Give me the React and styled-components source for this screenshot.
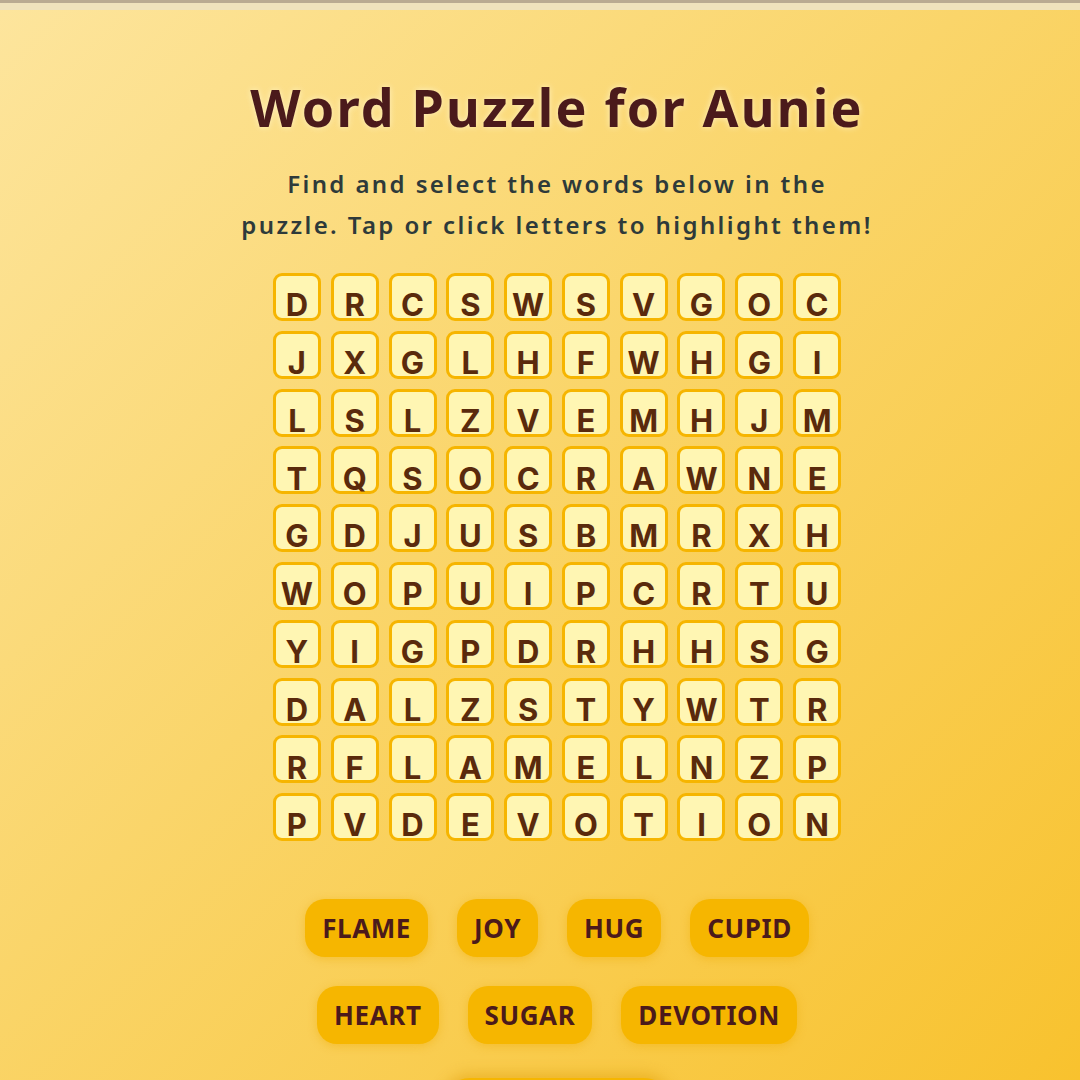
import React from "react";
import styled, { createGlobalStyle } from "styled-components";

const GRID = [
  "DRCSWSVGOC",
  "JXGLHFWHGI",
  "LSLZVEMHJM",
  "TQSOCRAWNE",
  "GDJUSBMRXH",
  "WOPUIPCRTU",
  "YIGPDRHHSG",
  "DALZSTYWTR",
  "RFLAMELNZP",
  "PVDEVOTION",
];

const WORDS = [
  ["FLAME", "JOY", "HUG", "CUPID"],
  ["HEART", "SUGAR", "DEVOTION"],
];

const GlobalStyle = createGlobalStyle`
  html, body {
    margin: 0;
    padding: 0;
    height: 100%;
    overflow: hidden;
  }
  body {
    font-family: "Noto Sans", "Open Sans", sans-serif;
    background: linear-gradient(135deg, #fde59d 0%, #fad56a 45%, #f8c22e 100%);
  }
`;

const BrowserEdge = styled.div`
  height: 7px;
  background: #efe3bd;
  border-top: 3px solid #b9ab92;
`;

const Page = styled.main`
  display: flex;
  flex-direction: column;
  align-items: center;
  padding: 62px 0 0 34px;
`;

const Title = styled.h1`
  margin: 0;
  font-size: 52px;
  line-height: 70px;
  font-weight: 700;
  letter-spacing: 2.2px;
  color: #4b1a1b;
  text-shadow: 0 0 6px rgba(255, 244, 200, 0.9);
`;

const Subtitle = styled.p`
  margin: 21px 0 0;
  width: 700px;
  text-align: center;
  font-size: 24px;
  line-height: 41px;
  font-weight: 600;
  letter-spacing: 2.4px;
  color: #2e3a3a;
`;

const Board = styled.div`
  margin-top: 28px;
  display: grid;
  grid-template-columns: repeat(10, 48px);
  grid-auto-rows: 48px;
  gap: 9.8px;
`;

const Cell = styled.div`
  box-sizing: border-box;
  display: flex;
  justify-content: center;
  align-items: flex-end;
  padding-bottom: 0;
  border: 3px solid #f6b500;
  border-radius: 9px;
  background: #fff6b3;
  color: #5a2a0c;
  font-family: Inter, "Noto Sans", sans-serif;
  font-size: 31px;
  font-weight: 700;
  line-height: 0.8;
`;

const WordList = styled.div`
  margin-top: 58px;
  display: flex;
  flex-direction: column;
  align-items: center;
  gap: 29px;
`;

const WordRow = styled.div`
  display: flex;
  gap: 29px;
`;

const Chip = styled.span`
  display: inline-flex;
  align-items: center;
  height: 58px;
  padding: 0 17px;
  border-radius: 20px;
  background: #f6b600;
  color: #4b1a1b;
  font-size: 26px;
  font-weight: 700;
  letter-spacing: 0.6px;
  box-shadow: 0 2px 10px rgba(240, 170, 0, 0.45);
`;

const CheckButton = styled.button`
  margin-top: 34px;
  width: 230px;
  height: 56px;
  border: none;
  border-radius: 28px;
  background: #f6b600;
  box-shadow: 0 -4px 14px rgba(220, 150, 0, 0.45);
`;

export default function App() {
  return (
    <>
      <GlobalStyle />
      <BrowserEdge />
      <Page>
        <Title>Word Puzzle for Aunie</Title>
        <Subtitle>
          Find and select the words below in the
          <br />
          puzzle. Tap or click letters to highlight them!
        </Subtitle>
        <Board>
          {GRID.map((row, r) =>
            row.split("").map((ch, c) => <Cell key={`${r}-${c}`}>{ch}</Cell>)
          )}
        </Board>
        <WordList>
          {WORDS.map((row, i) => (
            <WordRow key={i}>
              {row.map((w) => (
                <Chip key={w}>{w}</Chip>
              ))}
            </WordRow>
          ))}
        </WordList>
        <CheckButton aria-label="Check" />
      </Page>
    </>
  );
}
